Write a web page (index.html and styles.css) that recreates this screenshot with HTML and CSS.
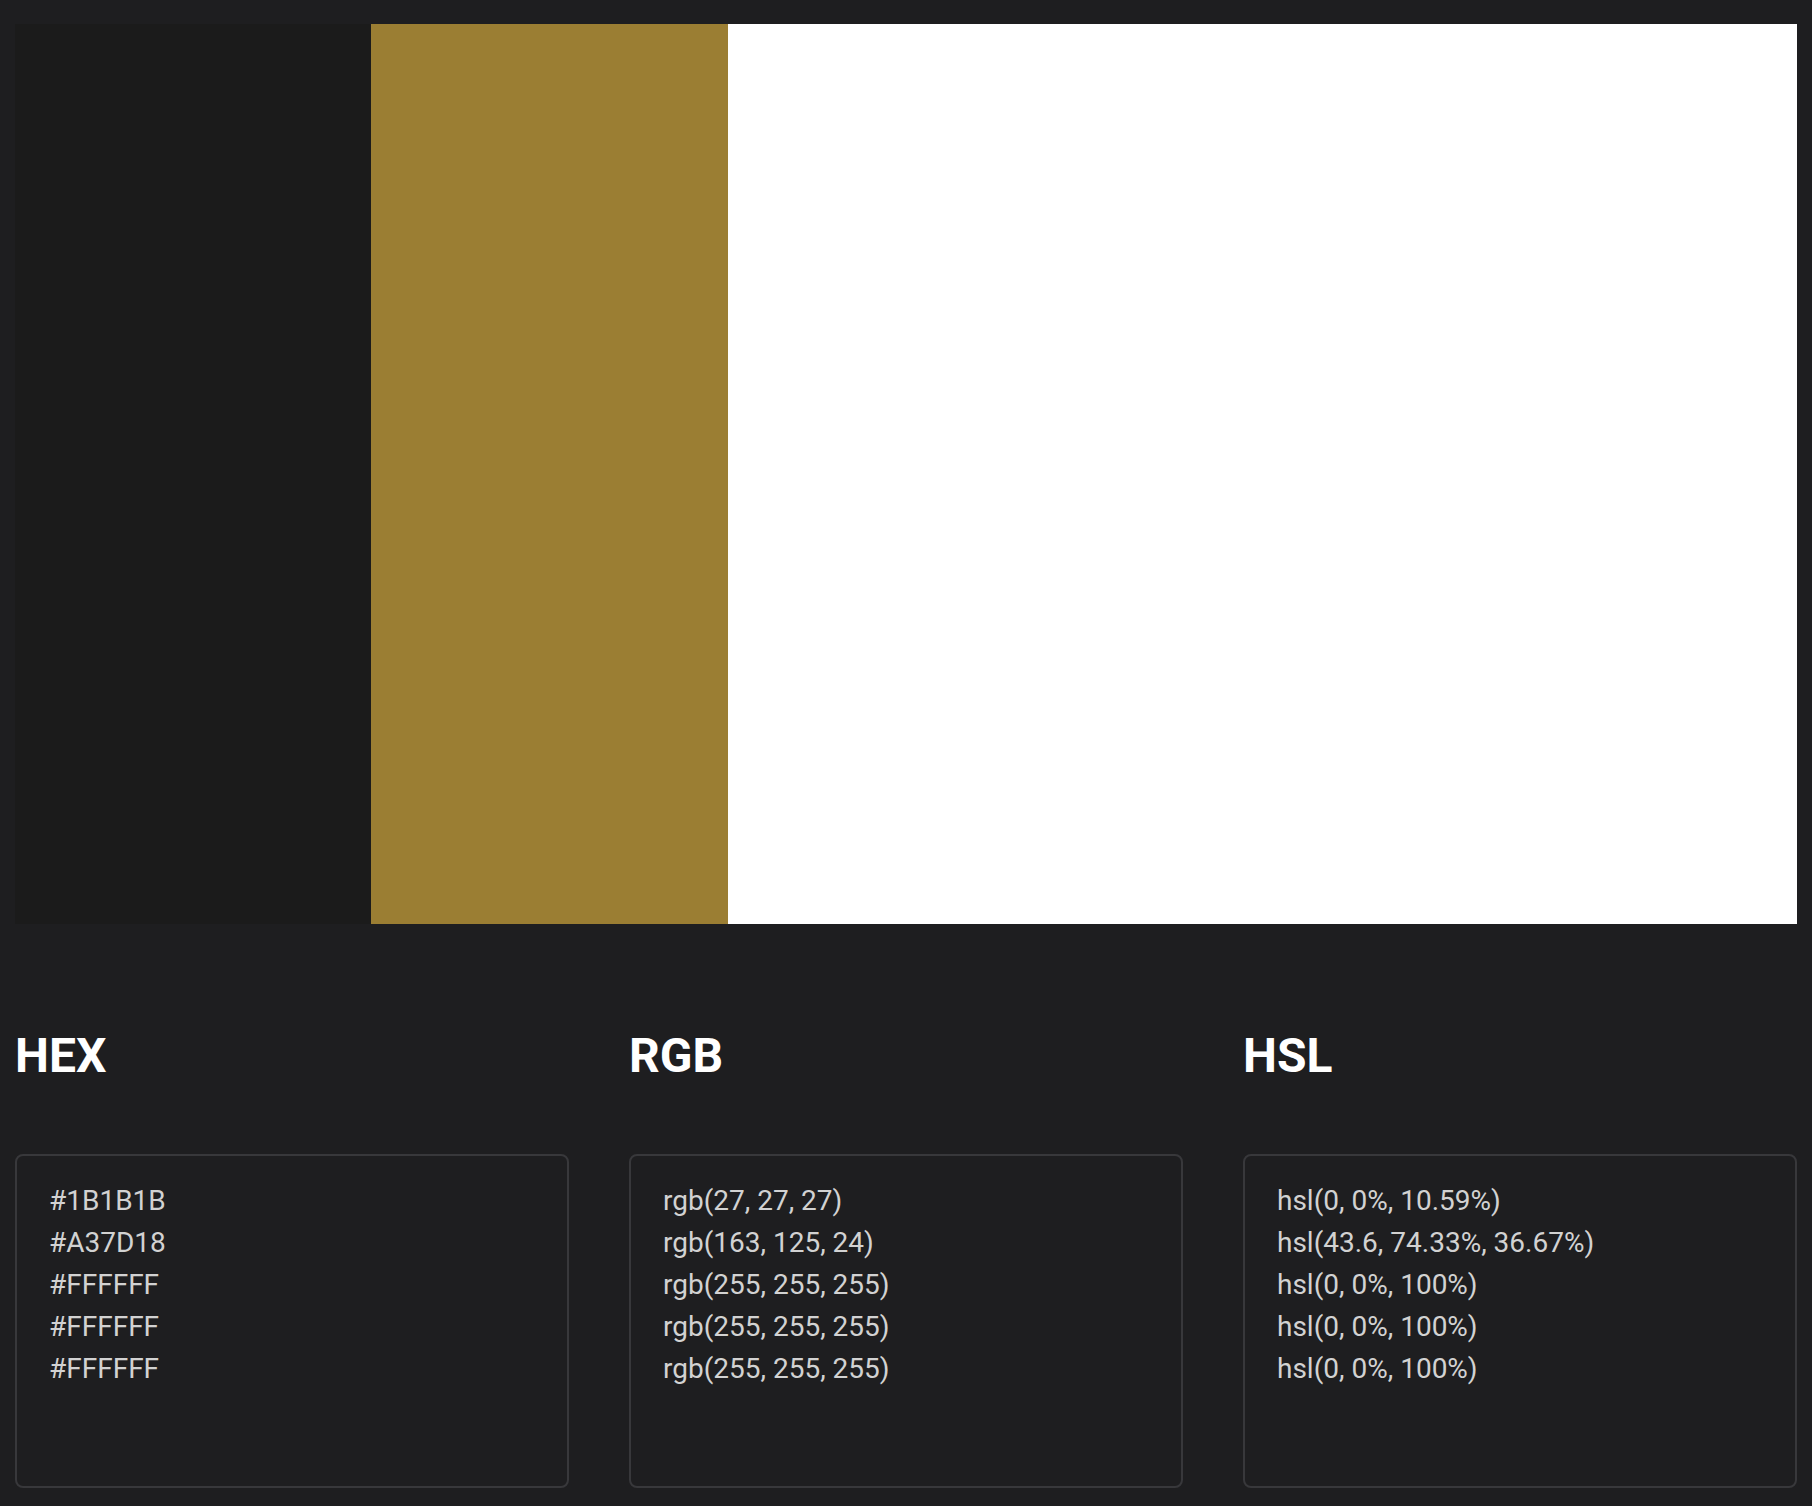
FILE: index.html
```html
<!DOCTYPE html>
<html lang="en">
<head>
<meta charset="utf-8">
<title>Palette</title>
<link rel="stylesheet" href="styles.css">
</head>
<body>
<main class="page">
  <div class="swatches">
    <div class="swatch" style="background:#1B1B1B"></div>
    <div class="swatch" style="background:#9B7E33"></div>
    <div class="swatch" style="background:#FFFFFF"></div>
    <div class="swatch" style="background:#FFFFFF"></div>
    <div class="swatch" style="background:#FFFFFF"></div>
  </div>
  <div class="formats">
    <section class="format">
      <h2 class="format-title">HEX</h2>
      <div class="format-box">
        <div class="line">#1B1B1B</div>
        <div class="line">#A37D18</div>
        <div class="line">#FFFFFF</div>
        <div class="line">#FFFFFF</div>
        <div class="line">#FFFFFF</div>
      </div>
    </section>
    <section class="format">
      <h2 class="format-title">RGB</h2>
      <div class="format-box">
        <div class="line">rgb(27, 27, 27)</div>
        <div class="line">rgb(163, 125, 24)</div>
        <div class="line">rgb(255, 255, 255)</div>
        <div class="line">rgb(255, 255, 255)</div>
        <div class="line">rgb(255, 255, 255)</div>
      </div>
    </section>
    <section class="format">
      <h2 class="format-title">HSL</h2>
      <div class="format-box">
        <div class="line">hsl(0, 0%, 10.59%)</div>
        <div class="line">hsl(43.6, 74.33%, 36.67%)</div>
        <div class="line">hsl(0, 0%, 100%)</div>
        <div class="line">hsl(0, 0%, 100%)</div>
        <div class="line">hsl(0, 0%, 100%)</div>
      </div>
    </section>
  </div>
</main>
</body>
</html>
```
FILE: styles.css
```css
html, body {
  margin: 0;
  padding: 0;
  background: #1e1e20;
}

body {
  font-family: Roboto, "Liberation Sans", sans-serif;
  color: #ffffff;
}

.page {
  padding: 24px 15px 0 15px;
}

.swatches {
  display: flex;
  height: 900px;
}

.swatch {
  flex: 1 1 0;
}

.formats {
  display: grid;
  grid-template-columns: repeat(3, 1fr);
  column-gap: 60px;
  margin-top: 104px;
}

.format-title {
  margin: 0;
  font-size: 48px;
  font-weight: 700;
  line-height: 56px;
  color: #ffffff;
}

.format-box {
  margin-top: 70px;
  box-sizing: border-box;
  height: 334px;
  border: 2px solid #38383b;
  border-radius: 8px;
  padding: 24px 32px 0 32px;
  font-size: 28px;
  line-height: 42px;
  color: #d2d2d2;
}
```
